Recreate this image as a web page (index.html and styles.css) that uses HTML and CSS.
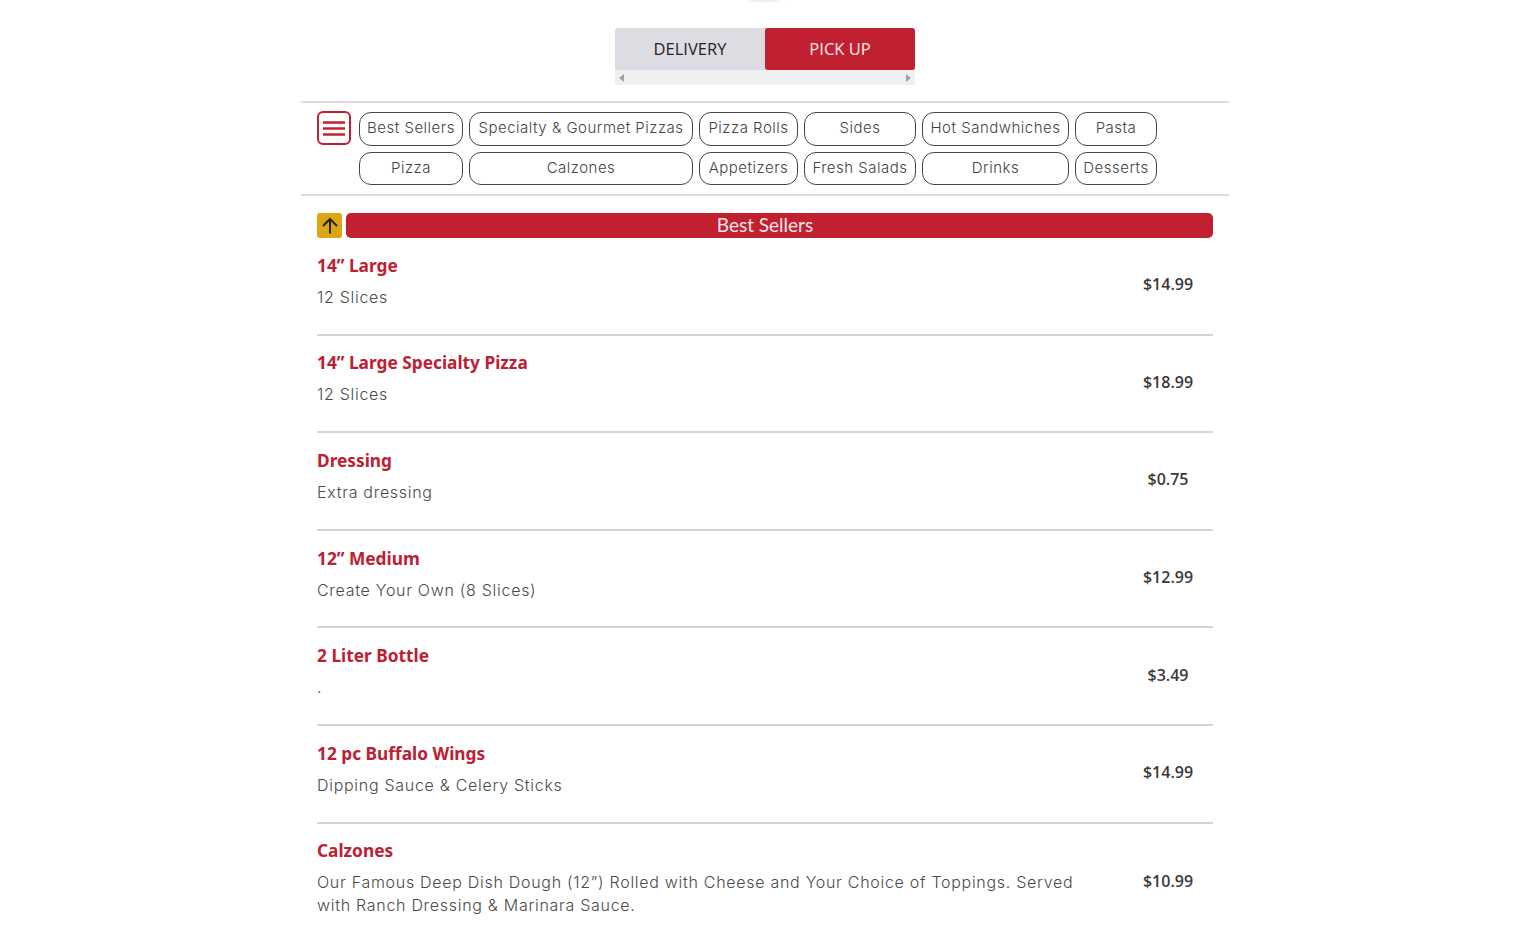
FILE: index.html
```html
<!DOCTYPE html>
<html lang="en">
<head>
<meta charset="utf-8">
<title>Menu</title>
<link rel="stylesheet" href="styles.css">
</head>
<body>
<div class="logo-stub"></div>
<div class="tabs-wrap">
  <div class="tabs">
    <div class="tab">DELIVERY</div>
    <div class="tab tab-active">PICK UP</div>
  </div>
  <div class="scrollbar">
    <span class="arrow arrow-left"></span>
    <span class="arrow arrow-right"></span>
  </div>
</div>
<main class="page">
  <nav class="cats">
    <button class="menu-btn" aria-label="Menu">
      <svg width="24" height="17" viewBox="0 0 24 17"><path d="M1 2.500h22M1 8.500h22M1 14.500h22" stroke="#c12030" stroke-width="2.400" fill="none"/></svg>
    </button>
    <div class="pills">
      <a class="pill">Best Sellers</a>
      <a class="pill">Specialty &amp; Gourmet Pizzas</a>
      <a class="pill">Pizza Rolls</a>
      <a class="pill">Sides</a>
      <a class="pill">Hot Sandwhiches</a>
      <a class="pill">Pasta</a>
      <a class="pill">Pizza</a>
      <a class="pill">Calzones</a>
      <a class="pill">Appetizers</a>
      <a class="pill">Fresh Salads</a>
      <a class="pill">Drinks</a>
      <a class="pill">Desserts</a>
    </div>
  </nav>
  <section class="menu">
    <div class="section-head">
      <button class="up-btn" aria-label="Back to top">
        <svg width="16" height="17" viewBox="0 0 16 17"><path d="M8 16.500V2M1 9l7-7 7 7" stroke="#2a2318" stroke-width="2" fill="none"/></svg>
      </button>
      <h2 class="section-title">Best Sellers</h2>
    </div>
    <article class="item">
      <div class="item-info"><h3 class="item-name">14” Large</h3><p class="item-desc">12 Slices</p></div>
      <div class="item-price">$14.99</div>
    </article>
    <article class="item">
      <div class="item-info"><h3 class="item-name">14” Large Specialty Pizza</h3><p class="item-desc">12 Slices</p></div>
      <div class="item-price">$18.99</div>
    </article>
    <article class="item">
      <div class="item-info"><h3 class="item-name">Dressing</h3><p class="item-desc">Extra dressing</p></div>
      <div class="item-price">$0.75</div>
    </article>
    <article class="item">
      <div class="item-info"><h3 class="item-name">12” Medium</h3><p class="item-desc">Create Your Own (8 Slices)</p></div>
      <div class="item-price">$12.99</div>
    </article>
    <article class="item">
      <div class="item-info"><h3 class="item-name">2 Liter Bottle</h3><p class="item-desc">.</p></div>
      <div class="item-price">$3.49</div>
    </article>
    <article class="item">
      <div class="item-info"><h3 class="item-name">12 pc Buffalo Wings</h3><p class="item-desc">Dipping Sauce &amp; Celery Sticks</p></div>
      <div class="item-price">$14.99</div>
    </article>
    <article class="item item-last">
      <div class="item-info"><h3 class="item-name">Calzones</h3><p class="item-desc">Our Famous Deep Dish Dough (12”) Rolled with Cheese and Your Choice of Toppings. Served with Ranch Dressing &amp; Marinara Sauce.</p></div>
      <div class="item-price">$10.99</div>
    </article>
  </section>
</main>
</body>
</html>
```
FILE: styles.css
```css
* { box-sizing: border-box; }
html, body { margin: 0; padding: 0; height: 933px; overflow: hidden; background: #fff; }
body { font-family: "Inter", "Liberation Sans", sans-serif; color: #444; position: relative; }
.logo-stub { position: absolute; left: 745px; top: -6px; width: 38px; height: 8px; border-radius: 50%; background: #e9e9e9; filter: blur(1.500px); }
.tabs-wrap { width: 300px; margin: 0 auto; padding-top: 28px; }
.tabs { display: flex; height: 42px; background: #dcdce2; border-radius: 3px 3px 0 0; }
.tab { flex: 1; display: flex; align-items: center; justify-content: center; padding-bottom: 2px; font: 400 16.500px "Open Sans", sans-serif; color: #212529; }
.tab-active { background: #c12030; color: #ffe9ea; border-radius: 3px; }
.scrollbar { height: 15px; background: #f0f0f1; display: flex; justify-content: space-between; align-items: center; padding: 0 4px; }
.arrow { width: 0; height: 0; border-top: 4px solid transparent; border-bottom: 4px solid transparent; }
.arrow-left { border-right: 5px solid #a3a3a3; }
.arrow-right { border-left: 5px solid #a3a3a3; }
.page { width: 928px; margin: 16px auto 0; }
.cats { display: flex; align-items: flex-start; gap: 8px; padding: 8px 16px 0; height: 95px; border-top: 2px solid #dcdcdc; border-bottom: 2px solid #dcdcdc; }
.menu-btn { width: 34px; height: 34px; padding: 0; flex: none; display: flex; align-items: center; justify-content: center; background: #fff; border: 2px solid #c12030; border-radius: 6px; }
.pills { display: grid; grid-template-columns: 104px 224px 99px 112px 147px 82px; grid-template-rows: 34px 33px; gap: 6px; margin-top: 1px; }
.pill { display: flex; align-items: center; justify-content: center; padding-bottom: 3px; border: 1px solid #444; border-radius: 12px; font-size: 15px; letter-spacing: 0.500px; font-weight: 300; color: #444; white-space: nowrap; }
.menu { padding: 17px 16px 0; }
.section-head { display: flex; gap: 4px; height: 25px; }
.up-btn { width: 25px; height: 25px; padding: 0; flex: none; display: flex; align-items: center; justify-content: center; background: #dba514; border: 0; border-radius: 3px; }
.section-title { flex: 1; margin: 0; padding: 0 29px 2px 0; background: #c12030; color: #fbe6e7; border-radius: 5px; text-align: center; font: 400 19px/23px "Lato", sans-serif; }
.item { display: flex; align-items: center; height: 97.600px; border-bottom: 2px solid #d5d5d5; padding-bottom: 4px; }
.item-last { border-bottom: 0; height: auto; padding-top: 14px; }
.item-info { flex: 1; min-width: 0; padding-right: 40px; padding-bottom: 6px; }
.item-name { margin: 1px 0 8px; font: 700 17.300px/24px "Noto Sans", sans-serif; color: #bb2033; }
.item-desc { margin: 0; font-size: 16px; line-height: 23px; letter-spacing: 0.710px; font-weight: 300; color: #4a4a4a; }
.item-price { width: 90px; flex: none; padding-top: 1px; text-align: center; font: 600 16px "Open Sans", sans-serif; color: #3a3a3a; }
```
